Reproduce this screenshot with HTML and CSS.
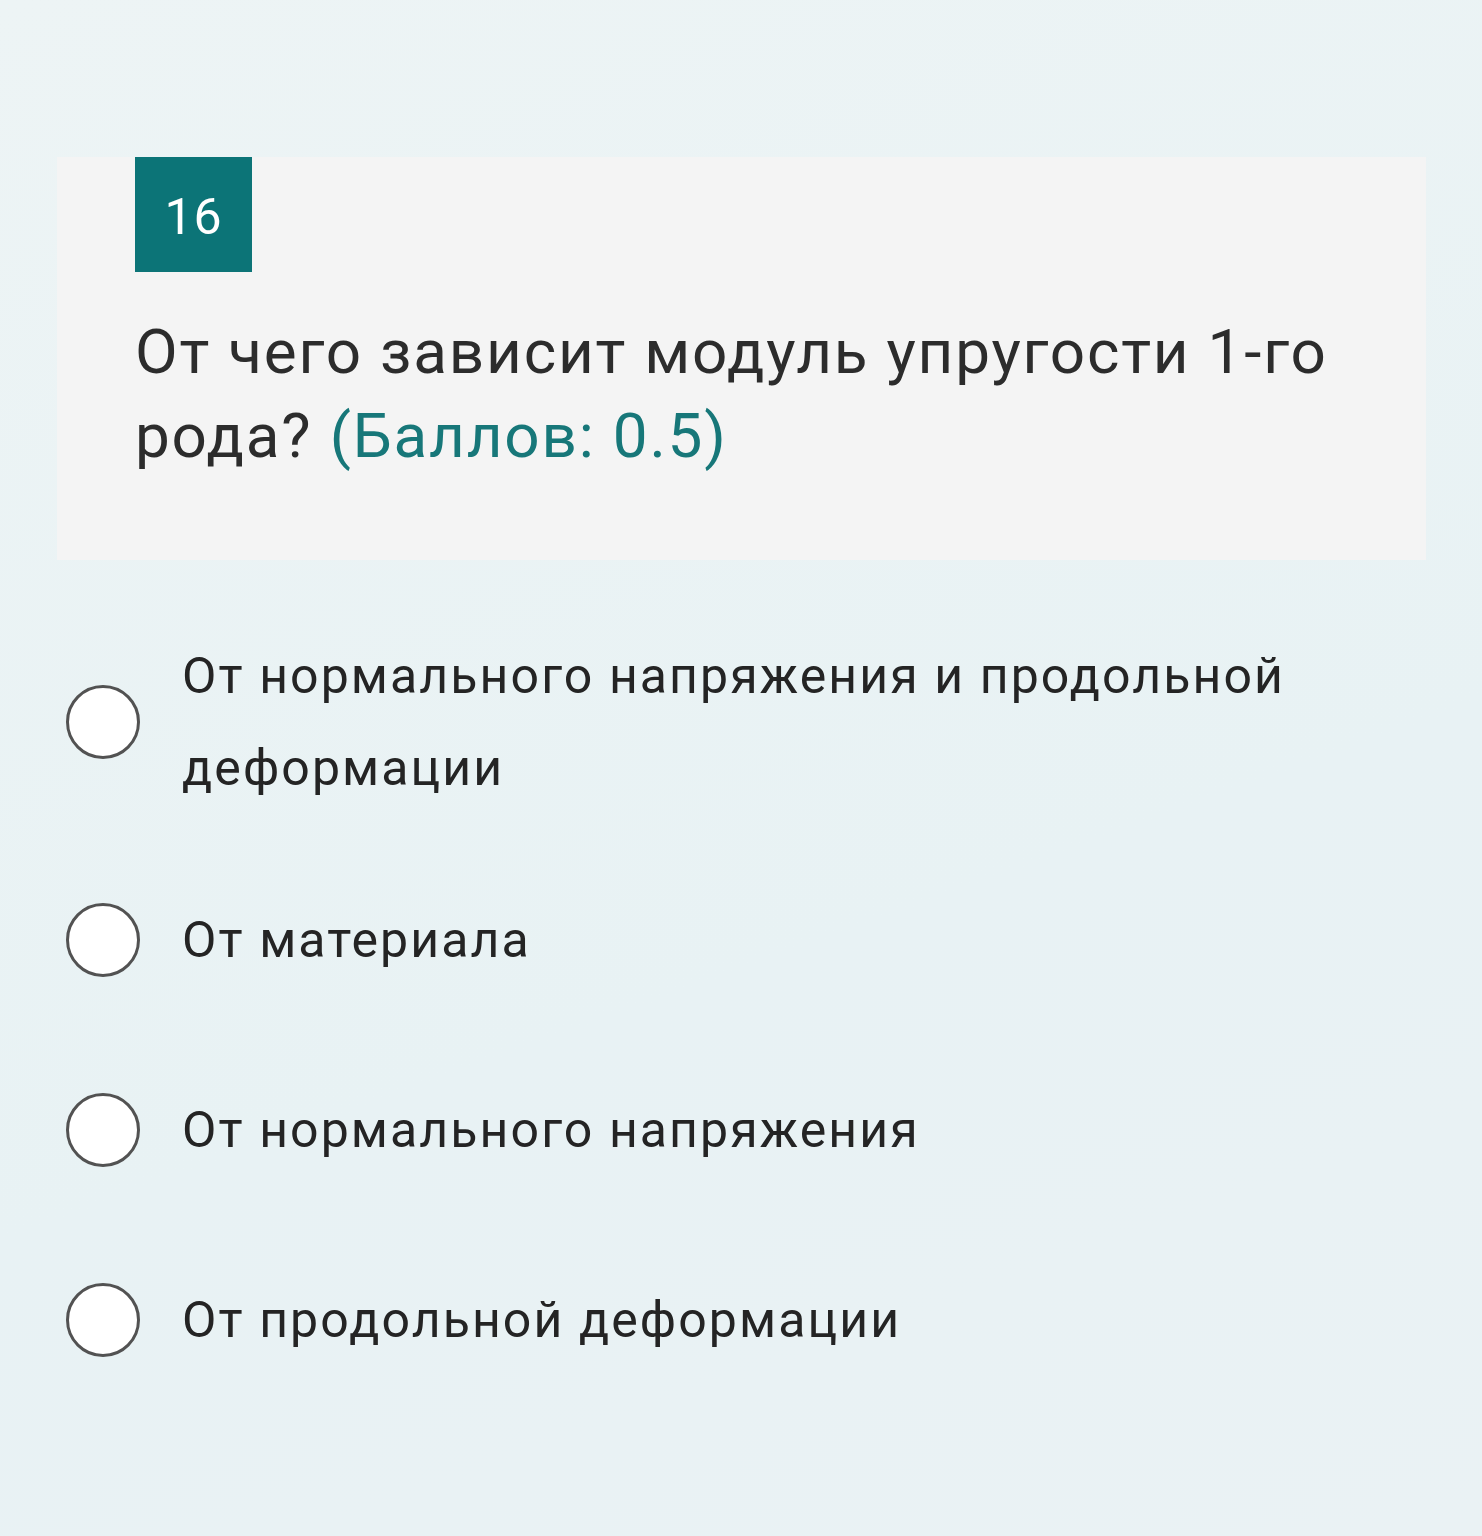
FILE: index.html
```html
<!DOCTYPE html>
<html lang="ru">
<head>
<meta charset="utf-8">
<link rel="stylesheet" href="styles.css">
</head>
<body>
<div class="page">
  <section class="card">
    <div class="badge">16</div>
    <h2 class="question"><span class="q-line">От чего зависит модуль упругости 1-го</span> <span class="q-line">рода?</span> <span class="points">(Баллов: 0.5)</span></h2>
  </section>
  <ul class="options">
    <li class="option option-tall"><span class="radio"></span><span class="label">От нормального напряжения и продольной деформации</span></li>
    <li class="option"><span class="radio"></span><span class="label">От материала</span></li>
    <li class="option"><span class="radio"></span><span class="label">От нормального напряжения</span></li>
    <li class="option"><span class="radio"></span><span class="label">От продольной деформации</span></li>
  </ul>
</div>
</body>
</html>
```

FILE: styles.css
```css
html, body {
  margin: 0;
  padding: 0;
}
body {
  width: 1482px;
  height: 1536px;
  background: linear-gradient(160deg, #edf4f5 0%, #e8f2f4 60%, #eaf2f4 100%);
  font-family: Roboto, "Noto Sans", sans-serif;
  color: #262626;
  overflow: hidden;
}
.page {
  padding-top: 157px;
}
.card {
  margin-left: 57px;
  width: 1369px;
  height: 403px;
  box-sizing: border-box;
  background: #f4f4f4;
  padding: 0 60px 0 78px;
}
.badge {
  width: 117px;
  height: 115px;
  background: #0c7477;
  color: #ffffff;
  font-size: 50px;
  line-height: 120px;
  text-align: center;
  font-weight: 400;
  letter-spacing: 1px;
}
.question {
  margin: 38px 0 0;
  font-size: 62px;
  font-weight: 400;
  line-height: 84px;
  letter-spacing: 1.8px;
  color: #2c2c2c;
}
.points {
  color: #177779;
}
.options {
  list-style: none;
  margin: 39px 0 0;
  padding: 0;
}
.option {
  display: flex;
  align-items: center;
  padding-left: 66px;
  height: 190px;
}
.option-tall {
  height: 246px;
}
.radio {
  flex: none;
  width: 68px;
  height: 68px;
  border: 3.5px solid #525252;
  border-radius: 50%;
  background: #ffffff;
}
.label {
  margin-left: 42px;
  font-size: 50px;
  line-height: 92px;
  letter-spacing: 2.1px;
  color: #242424;
  padding-right: 100px;
}
```
